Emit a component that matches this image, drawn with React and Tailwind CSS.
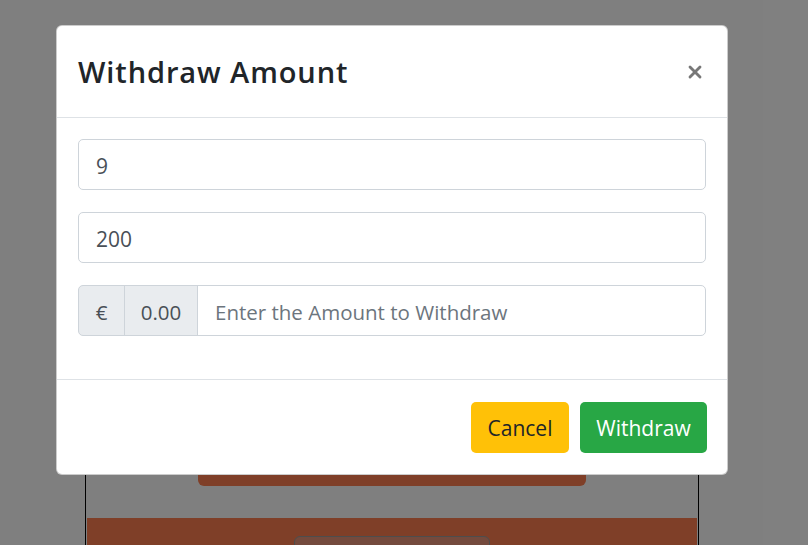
import { X } from 'lucide-react';

function PageBehind() {
  return (
    <div className="flex h-full flex-col bg-white pl-[85px] pt-[300px]">
      <div className="flex min-h-0 w-[614px] flex-1 flex-col border-x border-black px-px">
        <div className="flex h-[186px] shrink-0 items-end pl-[111px]">
          <div className="h-[100px] w-[388px] rounded-b-md bg-[#ff7f50]" />
        </div>
        <div className="mt-[32px] flex flex-1 bg-[#ff7f50] pl-[207px] pt-[18px]">
          <div className="h-[40px] w-[196px] rounded-md border border-[#9a9a9a] bg-[#e8947a]" />
        </div>
      </div>
    </div>
  );
}

export default function App() {
  const font = { fontFamily: '"Open Sans", "Noto Sans", sans-serif' };

  return (
    <div className="relative h-[545px] w-[808px] overflow-hidden" style={font}>
      <PageBehind />
      <div className="absolute inset-0 bg-black/50" />

      <div className="absolute left-[56px] top-[25px] flex h-[450px] w-[672px] flex-col rounded-md border border-black/20 bg-white">
        {/* header */}
        <div className="flex h-[92px] items-center justify-between border-b border-[#dee2e6] pl-[21px] pr-[22px]">
          <h5 className="text-[29px] font-semibold leading-none tracking-[0.9px] text-[#212529]">Withdraw Amount</h5>
          <button className="text-[#777]">
            <X size={20} strokeWidth={3.4} />
          </button>
        </div>

        {/* body */}
        <div className="flex flex-col gap-[22px] border-b border-[#dee2e6] px-[21px] pb-[43px] pt-[21px]">
          <input
            defaultValue="9"
            className="h-[51px] w-full rounded-[5px] border border-[#ced4da] px-[17px] pt-[3px] text-[21px] text-[#495057] outline-none"
          />
          <input
            defaultValue="200"
            className="h-[51px] w-full rounded-[5px] border border-[#ced4da] px-[17px] pt-[3px] text-[21px] text-[#495057] outline-none"
          />
          <div className="flex h-[51px] w-full text-[20.5px]">
            <span className="flex w-[47px] items-center justify-center rounded-l-[5px] border border-[#ced4da] bg-[#e9ecef] pt-[3px] text-[#495057]">
              €
            </span>
            <span className="-ml-px flex w-[74px] items-center justify-center border border-[#ced4da] bg-[#e9ecef] pt-[3px] text-[#495057]">
              0.00
            </span>
            <input
              placeholder="Enter the Amount to Withdraw"
              className="-ml-px min-w-0 flex-1 rounded-r-[5px] border border-[#ced4da] px-[17px] pt-[3px] text-[#495057] outline-none placeholder:text-[#6c757d]"
            />
          </div>
        </div>

        {/* footer */}
        <div className="flex flex-1 items-center justify-end gap-[11px] px-[20px]">
          <button className="h-[51px] w-[98px] rounded-[5px] bg-[#ffc107] pt-[4px] text-[21px] text-[#212529]">Cancel</button>
          <button className="h-[51px] w-[127px] rounded-[5px] bg-[#28a745] pt-[4px] text-[21px] text-white">Withdraw</button>
        </div>
      </div>
    </div>
  );
}
